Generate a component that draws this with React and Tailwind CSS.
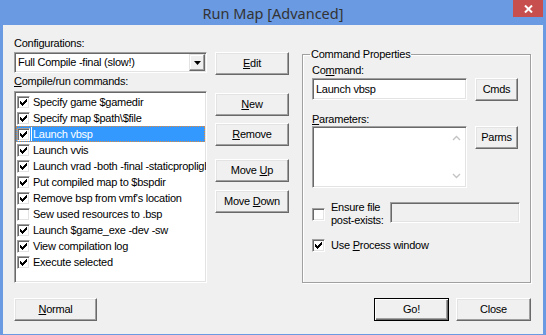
import React from 'react';

const commands = [
  { label: 'Specify game $gamedir', checked: true },
  { label: 'Specify map $path\\$file', checked: true },
  { label: 'Launch vbsp', checked: true, selected: true },
  { label: 'Launch vvis', checked: true },
  { label: 'Launch vrad -both -final -staticproplighting', checked: true },
  { label: 'Put compiled map to $bspdir', checked: true },
  { label: "Remove bsp from vmf's location", checked: true },
  { label: 'Sew used resources to .bsp', checked: false },
  { label: 'Launch $game_exe -dev -sw', checked: true },
  { label: 'View compilation log', checked: true },
  { label: 'Execute selected', checked: true },
];

// classic 7x7 check mark, one 3px column per x
const checkCols = [2, 3, 4, 3, 2, 1, 0];

const CheckBox = ({ checked }) => (
  <span className="w-[13px] h-[13px] shrink-0 bg-white border border-t-[#a0a0a0] border-l-[#a0a0a0] border-r-white border-b-white shadow-[inset_1px_1px_0_#696969,inset_-1px_-1px_0_#e3e3e3] flex items-center justify-center">
    {checked && (
      <svg width="7" height="7" viewBox="0 0 7 7" shapeRendering="crispEdges">
        {checkCols.map((y, x) => (
          <rect key={x} x={x} y={y} width="1" height="3" fill="#000" />
        ))}
      </svg>
    )}
  </span>
);

const Btn = ({ children, className = '', isDefault }) => (
  <button
    type="button"
    className={`h-[23px] bg-[#f0f0f0] text-[11px] leading-[13px] text-black ${
      isDefault
        ? 'border border-black shadow-[inset_1px_1px_0_#fff,inset_-1px_-1px_0_#696969,inset_-2px_-2px_0_#a0a0a0]'
        : 'border border-t-white border-l-white border-r-[#696969] border-b-[#696969] shadow-[inset_-1px_-1px_0_#a0a0a0,inset_1px_1px_0_#e3e3e3]'
    } ${className}`}
  >
    {children}
  </button>
);

const U = ({ children }) => <span className="underline underline-offset-[1px]">{children}</span>;

const sunken =
  'border border-t-[#a0a0a0] border-l-[#a0a0a0] border-r-white border-b-white shadow-[inset_1px_1px_0_#696969,inset_-1px_-1px_0_#e3e3e3]';

const Chevron = ({ up }) => (
  <svg width="9" height="6" viewBox="0 0 9 6">
    <path d={up ? 'M1 5 L4.5 1.5 L8 5' : 'M1 1 L4.5 4.5 L8 1'} fill="none" stroke="#c4c4c4" strokeWidth="1.4" />
  </svg>
);

export default function App() {
  return (
    <div className="w-[546px] h-[335px] bg-[#6a9ae2] flex flex-col overflow-hidden">
      {/* title bar */}
      <div className="relative h-[25px] shrink-0 flex items-center justify-center">
        <span className="font-['Noto_Sans',sans-serif] text-[14.5px] leading-[20px] text-[#333] mt-[1px]">
          Run Map [Advanced]
        </span>
        <div className="absolute top-0 right-[3px] w-[30px] h-[17px] bg-[#c7504f] flex items-center justify-center">
          <svg width="9" height="8" viewBox="0 0 9 8">
            <path d="M1 0.5 L8 7.5 M8 0.5 L1 7.5" stroke="#fff" strokeWidth="2" />
          </svg>
        </div>
      </div>

      {/* client */}
      <div className="mx-[3px] h-[309px] bg-[#f0f0f0] flex flex-col pt-[12px] pl-[11px] pr-[12px] font-['Liberation_Sans',Arial,sans-serif] text-[11px] leading-[13px] text-black tracking-[-0.25px]">
        <div className="flex items-start">
          {/* left column */}
          <div className="w-[193px] flex flex-col">
            <div className="h-[13px]">Configurations:</div>
            <div className={`mt-[2px] h-[21px] bg-white flex items-center ${sunken}`}>
              <span className="flex-1 pl-[3px] whitespace-nowrap overflow-hidden">Full Compile -final (slow!)</span>
              <span className="w-[16px] h-[17px] mr-[1px] bg-[#f0f0f0] border border-t-[#e3e3e3] border-l-[#e3e3e3] border-r-[#696969] border-b-[#696969] shadow-[inset_-1px_-1px_0_#a0a0a0,inset_1px_1px_0_#fff] flex items-center justify-center">
                <svg width="7" height="4" viewBox="0 0 7 4">
                  <path d="M0 0 H7 L3.5 4 Z" fill="#000" />
                </svg>
              </span>
            </div>
            <div className="mt-[2px] h-[13px]">
              <U>C</U>ompile/run commands:
            </div>
            <div className={`mt-[3px] h-[192px] bg-white overflow-hidden pt-[2px] pl-[1px] pr-[1px] ${sunken}`}>
              {commands.map((c) => (
                <div
                  key={c.label}
                  className={`relative h-[16px] flex items-center whitespace-nowrap ${
                    c.selected ? 'bg-[#3399ff] text-white border border-dotted border-[#e08a3c]' : 'border border-transparent'
                  }`}
                >
                  <CheckBox checked={c.checked} />
                  {c.selected && <span className="w-[1px] h-[14px] ml-[1px] bg-white" />}
                  <span className={c.selected ? 'ml-[1px]' : 'ml-[3px]'}>{c.label}</span>
                </div>
              ))}
            </div>
          </div>

          {/* middle buttons */}
          <div className="ml-[8px] w-[74px] pt-[15px] flex flex-col">
            <Btn><U>E</U>dit</Btn>
            <Btn className="mt-[18px]"><U>N</U>ew</Btn>
            <Btn className="mt-[7px]"><U>R</U>emove</Btn>
            <Btn className="mt-[13px]">Move <U>U</U>p</Btn>
            <Btn className="mt-[8px]">Move <U>D</U>own</Btn>
          </div>

          {/* command properties */}
          <fieldset className="ml-[13px] mt-[11px] w-[229px] h-[235px] border border-[#a0a0a0] shadow-[inset_1px_1px_0_#fff,1px_1px_0_#fff] pl-[9px]">
            <legend className="ml-[-2px] px-[1px] h-[13px]">Command Properties</legend>
            <div className="mt-[3px] h-[13px]">
              Co<U>m</U>mand:
            </div>
            <div className="mt-[1px] flex">
              <div className={`w-[155px] h-[22px] bg-white flex items-center pl-[3px] ${sunken}`}>Launch vbsp</div>
              <Btn className="ml-[8px] w-[43px] h-[22px]">Cmds</Btn>
            </div>
            <div className="mt-[12px] h-[13px]">
              <U>P</U>arameters:
            </div>
            <div className="flex">
              <div className={`w-[155px] h-[62px] bg-white flex justify-end ${sunken}`}>
                <div className="w-[17px] mr-[1px] flex flex-col justify-between items-center py-[8px]">
                  <Chevron up />
                  <Chevron />
                </div>
              </div>
              <Btn className="ml-[8px] w-[43px] h-[22px]">Parms</Btn>
            </div>
            <div className="mt-[13px] flex items-start">
              <span className="mt-[7px]">
                <CheckBox checked={false} />
              </span>
              <div className="ml-[6px] w-[60px] leading-[13px]">
                Ensure file
                <br />
                post-exists:
              </div>
              <div className={`ml-[-1px] mt-[1px] w-[130px] h-[21px] bg-[#f0f0f0] ${sunken}`} />
            </div>
            <div className="mt-[12px] h-[13px] flex items-center">
              <CheckBox checked />
              <span className="ml-[6px]">
                Use <U>P</U>rocess window
              </span>
            </div>
          </fieldset>
        </div>

        {/* bottom buttons */}
        <div className="mt-[15px] flex">
          <Btn className="w-[83px]"><U>N</U>ormal</Btn>
          <div className="flex-1" />
          <Btn isDefault className="w-[75px]">Go!</Btn>
          <Btn className="ml-[7px] w-[75px]">Close</Btn>
        </div>
      </div>
    </div>
  );
}
